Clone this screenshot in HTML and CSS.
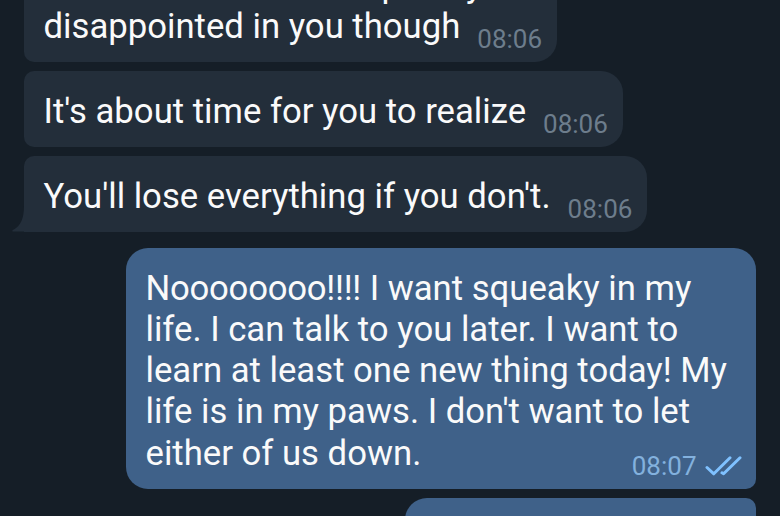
FILE: index.html
```html
<!DOCTYPE html>
<html lang="en">
<head>
    <meta charset="UTF-8">
    <meta name="viewport" content="width=device-width, initial-scale=1.0">
    <title>Chat</title>
    <link rel="stylesheet" href="styles.css">
</head>
<body>
    <main class="chat">
        <div class="message incoming wrapped">
            <p class="text">I can see that I'm completely<br>disappointed in you though</p>
            <span class="time">08:06</span>
        </div>
        <div class="message incoming">
            <p class="text">It's about time for you to realize</p>
            <span class="time">08:06</span>
        </div>
        <div class="message incoming last">
            <svg class="tail" width="24" height="26" viewBox="0 0 24 26">
                <path d="M12 0 C12 12 9 20 1 24 Q-1 25.5 2 25.5 H24 V0 Z"/>
            </svg>
            <p class="text">You'll lose everything if you don't.</p>
            <span class="time">08:06</span>
        </div>
        <div class="message outgoing">
            <p class="text"><span class="tight">Noooooooo!!!!</span> I want squeaky in my<br>life. I can talk to you later. I want to<br>learn at least one new thing today! My<br>life is in my paws. I don't want to let<br>either of us down.</p>
            <div class="status">
                <span class="time">08:07</span>
                <svg class="checks" width="38" height="22" viewBox="0 0 38 22">
                    <path d="M3 12.5 L9.8 18.8 L26 2.8 M18 17.8 L19.6 18.8 L36 2.8"/>
                </svg>
            </div>
        </div>
        <div class="message outgoing next"></div>
    </main>
</body>
</html>
```
FILE: styles.css
```css
:root {
    --bg-color: #151e27;
    --incoming-color: #232e3a;
    --outgoing-color: #3f6189;
    --text-color: #fafafa;
    --time-color: #6d7d8c;
    --time-out-color: #83b1de;
    --check-color: #7fc1ff;
}

body {
    margin: 0;
    background-color: var(--bg-color);
    color: var(--text-color);
    font-family: Roboto, sans-serif;
    overflow: hidden;
}

.chat {
    box-sizing: border-box;
    height: 516px;
    padding: 0 24px;
    display: flex;
    flex-direction: column;
    align-items: flex-start;
    justify-content: flex-end;
    gap: 9px;
    overflow: hidden;
}

.message {
    position: relative;
    flex-shrink: 0;
    display: flex;
    box-sizing: border-box;
    padding: 19.5px 15.5px 15.3px 19.5px;
}

.text {
    margin: 0;
    font-size: 34.7px;
    line-height: 41.2px;
    white-space: nowrap;
}

.tight {
    letter-spacing: -0.25px;
}

.time {
    font-size: 26px;
    line-height: 30px;
}

.incoming {
    padding: 20px 15px 14.8px 19.5px;
    background-color: var(--incoming-color);
    border-radius: 10px 22px 22px 10px;
}

.incoming .time {
    align-self: flex-end;
    margin: 0 0 -6.5px 17px;
    color: var(--time-color);
}

/* the time tucks in after the shorter last line */
.wrapped .time {
    margin-left: -5px;
}

.last {
    border-bottom-left-radius: 0;
}

.tail {
    position: absolute;
    left: -12px;
    bottom: 0;
    fill: var(--incoming-color);
}

.outgoing {
    align-self: flex-end;
    flex-direction: column;
    width: 630px;
    margin-top: 6.8px;
    background-color: var(--outgoing-color);
    border-radius: 22px 22px 10px 22px;
}

.status {
    display: flex;
    align-items: center;
    align-self: flex-end;
    gap: 7px;
    margin: -23px -1px -7px 0;
}

.status .time {
    color: var(--time-out-color);
}

.checks {
    fill: none;
    stroke: var(--check-color);
    stroke-width: 3;
    stroke-linecap: round;
    stroke-linejoin: round;
}

/* next bubble, cut off by the bottom of the chat */
.next {
    width: 351px;
    height: 76px;
    margin: 0 0 -58px;
    border-radius: 22px 10px 10px 22px;
}
```
